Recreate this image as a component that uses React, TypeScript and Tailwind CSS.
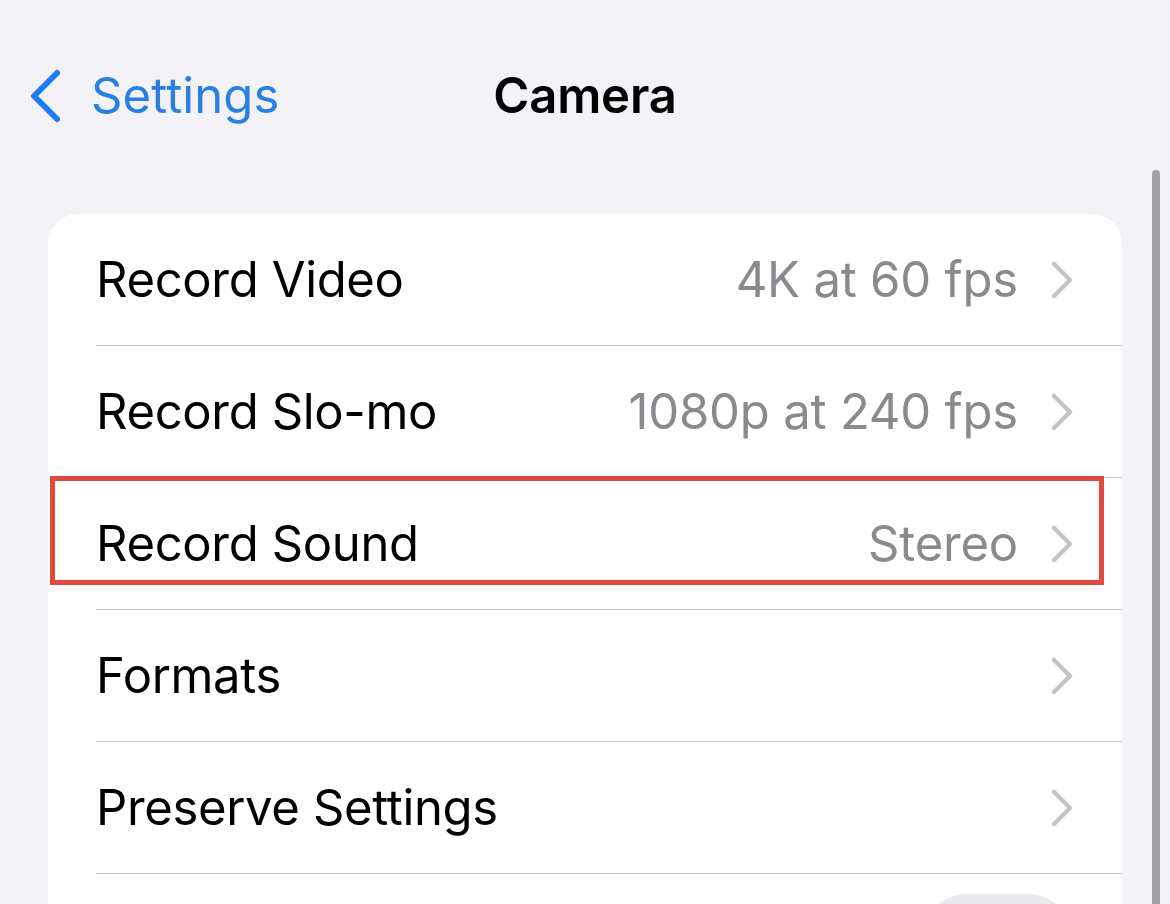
import React from "react";

const font = { fontFamily: "Inter, 'Noto Sans', sans-serif" };

function Chevron() {
  return (
    <svg width="24" height="38" viewBox="0 0 24 38" className="shrink-0">
      <path d="M4 3 L20 19 L4 35" fill="none" stroke="#c4c4c7" strokeWidth="4.5" strokeLinecap="round" strokeLinejoin="round" />
    </svg>
  );
}

function Row({ label, value, last }: { label: string; value?: string; last?: boolean }) {
  return (
    <div className="pl-[48px]">
      <div className={`flex items-center h-[132px] pr-[48px] ${last ? "" : "border-b border-[#c8c8cb]"}`}>
        <span className="text-[49px] tracking-[-0.35px] text-black flex-1">{label}</span>
        {value && <span className="text-[49px] tracking-[-0.2px] text-[#8a8a8e] mr-[32px]">{value}</span>}
        <Chevron />
      </div>
    </div>
  );
}

export default function App() {
  return (
    <div className="relative w-[1170px] h-[904px] overflow-hidden bg-[#f2f2f7]" style={font}>
      <div className="mt-[40px] h-[112px] grid grid-cols-[1fr_auto_1fr] items-center">
        <div className="flex items-center pl-[27px]">
          <svg width="36" height="56" viewBox="0 0 36 56">
            <path d="M30 5 L7 28 L30 51" fill="none" stroke="#1c7cf0" strokeWidth="6" strokeLinecap="round" strokeLinejoin="round" />
          </svg>
          <span className="ml-[28px] text-[49px] tracking-[0.1px] text-[#2a80e2]">Settings</span>
        </div>
        <span className="text-[49px] font-semibold tracking-[-0.2px] text-black">Camera</span>
        <div />
      </div>
      <div className="mt-[62px] ml-[48px] w-[1074px] rounded-[30px] bg-white">
        <Row label="Record Video" value="4K at 60 fps" />
        <Row label="Record Slo-mo" value="1080p at 240 fps" />
        <Row label="Record Sound" value="Stereo" />
        <Row label="Formats" />
        <Row label="Preserve Settings" />
        <div className="pl-[48px]">
          <div className="flex items-center justify-end h-[132px] pr-[48px]">
            <div className="w-[153px] h-[93px] rounded-full bg-[#e9e9eb]" />
          </div>
        </div>
      </div>
      <div className="absolute left-[50px] top-[476px] w-[1054px] h-[109px] border-[5px] border-[#e2483d]" />
      <div className="absolute left-[1152px] top-[170px] w-[8px] h-[760px] rounded-full bg-[#a1a1a6]" />
    </div>
  );
}
